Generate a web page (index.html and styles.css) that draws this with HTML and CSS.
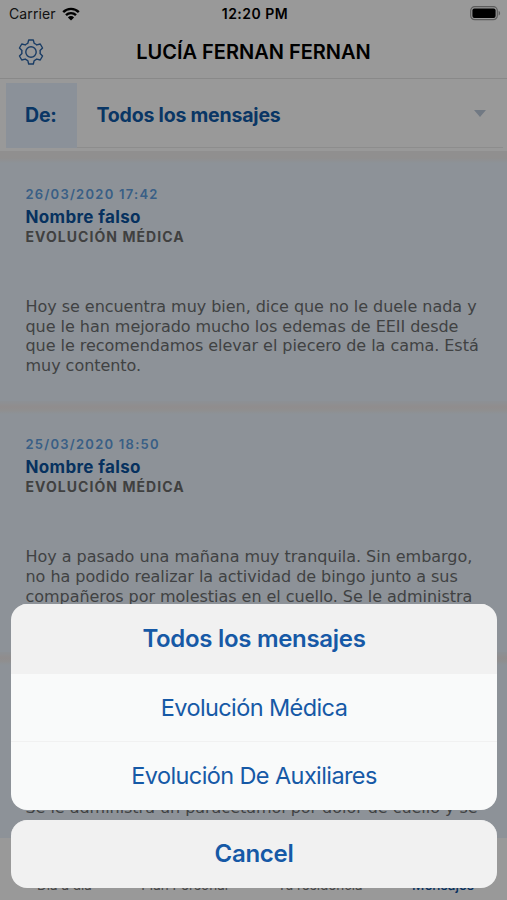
FILE: index.html
```
<!DOCTYPE html>
<html lang="es">
<head>
    <meta charset="UTF-8">
    <meta name="viewport" content="width=device-width, initial-scale=1.0">
    <title>Mensajes</title>
    <link rel="stylesheet" href="styles.css">
</head>
<body>
    <div class="app">
        <div class="status-bar">
            <div class="carrier">
                <span>Carrier</span>
                <svg width="18" height="14" viewBox="0 0 18 14">
                    <path d="M1.2 5.1a11 11 0 0 1 15.6 0M4 8.2a7 7 0 0 1 10 0" fill="none" stroke="#000" stroke-width="2.4"/>
                    <path d="M9 13.6L5.9 10.4a4.4 4.4 0 0 1 6.2 0z"/>
                </svg>
            </div>
            <div class="clock">12:20 PM</div>
            <svg class="battery" width="31" height="15" viewBox="0 0 31 15">
                <rect x="0.7" y="0.7" width="26.6" height="13" rx="4" fill="none" stroke="#999" stroke-width="1.2"/>
                <rect x="2.4" y="2.4" width="23.2" height="9.6" rx="2"/>
                <path d="M28.6 4.8c2 .8 2 4 0 4.8z" fill="#999"/>
            </svg>
        </div>

        <header class="header">
            <svg class="settings" width="26" height="26" viewBox="-13 -13 26 26" fill="none" stroke="#2a64a8" stroke-width="1.4" stroke-linejoin="round">
                <path d="M-3.2-8.6L-2.3-12H2.3L3.2-8.6Q4.6-8.2 5.85-7.07L9.24-7.99L11.54-4.01L9.05-1.53Q9.4 0 9.05 1.53L11.54 4.01L9.24 7.99L5.85 7.07Q4.6 8.2 3.2 8.6L2.3 12H-2.3L-3.2 8.6Q-4.6 8.2-5.85 7.07L-9.24 7.99L-11.54 4.01L-9.05 1.53Q-9.4 0-9.05-1.53L-11.54-4.01L-9.24-7.99L-5.85-7.07Q-4.6-8.2-3.2-8.6z"/>
                <circle r="5.2"/>
            </svg>
            <h1>LUCÍA FERNAN FERNAN</h1>
        </header>

        <div class="filter">
            <label class="filter-label">De:</label>
            <div class="filter-value">
                <span>Todos los mensajes</span>
                <i class="caret"></i>
            </div>
        </div>

        <main class="messages">
            <article class="message">
                <time class="date">26/03/2020 17:42</time>
                <h2>Nombre falso</h2>
                <h3>EVOLUCIÓN MÉDICA</h3>
                <p>Hoy se encuentra muy bien, dice que no le duele nada y<br>que le han mejorado mucho los edemas de EEII desde<br>que le recomendamos elevar el piecero de la cama. Está<br>muy contento.</p>
            </article>
            <article class="message">
                <time class="date">25/03/2020 18:50</time>
                <h2>Nombre falso</h2>
                <h3>EVOLUCIÓN MÉDICA</h3>
                <p>Hoy a pasado una mañana muy tranquila. Sin embargo,<br>no ha podido realizar la actividad de bingo junto a sus<br>compañeros por molestias en el cuello. Se le administra</p>
            </article>
            <article class="message">
                <p>Se le administra un paracetamol por dolor de cuello y se</p>
            </article>
        </main>

        <nav class="tabs">
            <span>Día a día</span>
            <span>Plan Personal</span>
            <span>Tu residencia</span>
            <span class="active">Mensajes</span>
        </nav>
    </div>

    <div class="overlay">
        <div class="sheet">
            <button class="option selected">Todos los mensajes</button>
            <button class="option">Evolución Médica</button>
            <button class="option">Evolución De Auxiliares</button>
        </div>
        <button class="sheet option cancel">Cancel</button>
    </div>
</body>
</html>
```
FILE: styles.css
```
* {
    box-sizing: border-box;
}
body {
    margin: 0;
    font-family: Inter, 'Open Sans', sans-serif;
    color: #000;
}
h1, h2, h3, p {
    margin: 0;
}
.app {
    height: 900px;
    display: flex;
    flex-direction: column;
    overflow: hidden;
    background: #fff;
}
.status-bar {
    flex: none;
    height: 27px;
    padding: 0 6px 0 9px;
    display: grid;
    grid-template-columns: 1fr auto 1fr;
    align-items: center;
    font-size: 14px;
}
.carrier {
    display: flex;
    align-items: center;
    gap: 6px;
    color: #222;
    letter-spacing: 0.1px;
}
.clock {
    font-weight: 600;
    letter-spacing: 0.5px;
}
.battery {
    justify-self: end;
}
.header {
    flex: none;
    height: 52px;
    padding: 0 18px 1px;
    display: grid;
    grid-template-columns: 26px 1fr 26px;
    align-items: center;
    border-bottom: 1px solid #e4e4e4;
}
h1 {
    font-size: 20px;
    font-weight: 600;
    text-align: center;
    white-space: nowrap;
}
.filter {
    flex: none;
    height: 72px;
    padding: 4px 4px 3px 6px;
    display: flex;
    font-size: 19.5px;
    font-weight: 700;
    color: #0f5aa8;
    letter-spacing: -0.2px;
}
.filter-label {
    width: 71px;
    padding-left: 19px;
    line-height: 64px;
    background: #e8f2ff;
}
.filter-value {
    flex: 1;
    padding: 0 17px 0 19.5px;
    display: flex;
    align-items: center;
    justify-content: space-between;
    border-bottom: 1px solid #ebebeb;
}
.caret {
    border: 6px solid transparent;
    border-top: 7px solid #bccadb;
    border-bottom: 0;
    margin-top: -4px;
}
.messages {
    flex: 1;
    overflow: hidden;
}
.message {
    height: 250.4px;
    padding: 34px 0 0 25.5px;
    background: linear-gradient(#f0eeee 7px, #ebf4fd 12px);
}
.message + .message {
    background: linear-gradient(#ebf1f8, #f0ebec 6px, #efeeef 9px, #ebf4fd 13px);
}
.date {
    display: block;
    margin-bottom: 3px;
    font-size: 13px;
    line-height: 18px;
    font-weight: 600;
    color: #5f9ee0;
    letter-spacing: 1.25px;
}
h2 {
    font-size: 17px;
    line-height: 22px;
    font-weight: 700;
    color: #0a529f;
    letter-spacing: 0.35px;
}
h3 {
    font-size: 14px;
    line-height: 18px;
    font-weight: 700;
    color: #6c6c6c;
    letter-spacing: 1.05px;
}
.message p {
    padding-top: 51px;
    font: 16px/19.6px Verdana, 'DejaVu Sans', sans-serif;
    letter-spacing: -0.04px;
    white-space: nowrap;
    color: #6c6e70;
}
.message:last-child p {
    padding-top: 112px;
}
.tabs {
    flex: none;
    height: 62px;
    padding: 0 33px 7px 37px;
    display: flex;
    justify-content: space-between;
    align-items: flex-end;
    font-size: 13.5px;
    line-height: 16px;
    color: #777;
}
.tabs .active {
    color: #0a529f;
    font-weight: 500;
}

/* action sheet */
.overlay {
    position: absolute;
    top: 0;
    left: 0;
    width: 100%;
    height: 900px;
    padding: 0 10px 12px 11px;
    display: flex;
    flex-direction: column;
    justify-content: flex-end;
    gap: 10px;
    background: rgba(0, 0, 0, 0.4);
}
.sheet {
    border-radius: 16px;
    overflow: hidden;
}
.option {
    display: block;
    width: 100%;
    height: 68.4px;
    padding: 0 0 1px;
    border: 0;
    border-top: 1px solid #f1f1f1;
    background: #f9fafa;
    font-family: inherit;
    font-size: 23.5px;
    color: #1659a6;
    letter-spacing: -0.6px;
}
.option.selected,
.cancel {
    background: #f1f1f1;
    font-size: 24px;
    font-weight: 600;
    letter-spacing: -0.3px;
}
```
